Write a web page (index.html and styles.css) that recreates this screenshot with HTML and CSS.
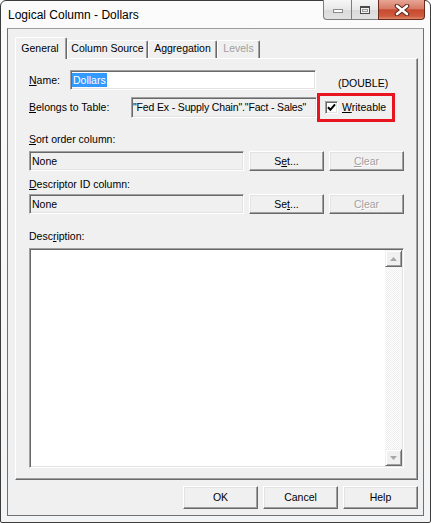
FILE: index.html
```html
<!DOCTYPE html>
<html>
<head>
<meta charset="utf-8">
<title>Logical Column - Dollars</title>
<link rel="stylesheet" href="styles.css">
</head>
<body>
<div class="window">
  <div class="titlebar">
    <span class="title">Logical Column - Dollars</span>
    <div class="caption">
      <div class="cap cap-min"><svg width="12" height="6" viewBox="0 0 12 6"><rect x="1.5" y="1.5" width="9" height="3" fill="#fdfdfd" stroke="#8a8a8a"/></svg></div>
      <div class="cap cap-max"><svg width="12" height="10" viewBox="0 0 12 10"><rect x="1.5" y="1.5" width="9" height="7" fill="#f4f4f4" stroke="#4a4a4a"/><rect x="1" y="1" width="10" height="2" fill="#4a4a4a"/><rect x="3.5" y="4.5" width="5" height="2" fill="none" stroke="#9a9a9a"/></svg></div>
      <div class="cap cap-close"><svg width="16" height="12" viewBox="0 0 16 12"><path d="M3 2 L13 10 M13 2 L3 10" stroke="#5d2418" stroke-width="4.6" stroke-linecap="round"/><path d="M3 2 L13 10 M13 2 L3 10" stroke="#ffffff" stroke-width="2.6" stroke-linecap="round"/></svg></div>
    </div>
  </div>
  <div class="client">
    <div class="tabs">
      <div class="tab active tab-general">General</div>
      <div class="tab tab-source">Column Source</div>
      <div class="tab tab-agg">Aggregation</div>
      <div class="tab disabled tab-levels">Levels</div>
    </div>
    <div class="panel">
      <div class="row row-name">
        <span class="lbl lbl-name"><u>N</u>ame:</span>
        <div class="field field-name"><span class="sel">Dollars</span></div>
        <span class="type">(DOUBLE)</span>
      </div>
      <div class="row row-table">
        <span class="lbl lbl-table"><u>B</u>elongs to Table:</span>
        <div class="field readonly field-table">"Fed Ex - Supply Chain"."Fact - Sales"</div>
        <div class="highlight">
          <span class="check"><svg width="9" height="9" viewBox="0 0 9 9"><path d="M1 4.2 L3.4 6.8 L8 1.4" fill="none" stroke="#000" stroke-width="2"/></svg></span>
          <span class="check-text"><u>W</u>riteable</span>
        </div>
      </div>
      <div class="block-lbl sort-lbl"><u>S</u>ort order column:</div>
      <div class="row row-pick">
        <div class="field readonly field-pick">None</div>
        <div class="btn btn-set">S<u>e</u>t...</div>
        <div class="btn btn-clear disabled"><u>C</u>lear</div>
      </div>
      <div class="block-lbl desc-id-lbl"><u>D</u>escriptor ID column:</div>
      <div class="row row-pick">
        <div class="field readonly field-pick">None</div>
        <div class="btn btn-set">Se<u>t</u>...</div>
        <div class="btn btn-clear disabled">C<u>l</u>ear</div>
      </div>
      <div class="block-lbl desc-lbl">Desc<u>r</u>iption:</div>
      <div class="memo">
        <div class="memo-text"></div>
        <div class="scrollbar">
          <div class="sb-btn"><svg width="7" height="4" viewBox="0 0 7 4"><path d="M0 4 L3.5 0 L7 4 Z" fill="#a8a8a8"/></svg></div>
          <div class="sb-track"></div>
          <div class="sb-btn"><svg width="7" height="4" viewBox="0 0 7 4"><path d="M0 0 L3.5 4 L7 0 Z" fill="#a8a8a8"/></svg></div>
        </div>
      </div>
    </div>
    <div class="footer">
      <div class="btn btn-dlg">OK</div>
      <div class="btn btn-dlg">Cancel</div>
      <div class="btn btn-dlg">Help</div>
    </div>
  </div>
</div>
</body>
</html>
```

FILE: styles.css
```css
* { box-sizing: border-box; margin: 0; padding: 0; }
html, body { width: 431px; height: 523px; overflow: hidden; background: #ffffff; }
body { font-family: "Liberation Sans", Arial, sans-serif; font-size: 10.5px; color: #000; }
u { text-decoration: underline; text-underline-offset: 1px; }

.window {
  width: 431px; height: 523px;
  border: 1px solid #3c3c3c;
  border-radius: 6px 6px 2px 2px;
  background: linear-gradient(#fbfbfc, #f3f4f5);
  padding: 0 6px 6px 6px;
  display: flex; flex-direction: column;
}
.titlebar { height: 27px; display: flex; justify-content: space-between; align-items: flex-start; }
.title { font-size: 12px; line-height: 14px; margin-top: 7px; margin-left: 1px; text-shadow: 0 0 6px #fff; }
.caption { display: flex; margin-top: -1px; margin-right: -1px; }
.cap { height: 20px; display: flex; align-items: center; justify-content: center; border: 1px solid #7e7e7e; border-top: none; }
.cap-min { width: 28px; border-radius: 0 0 0 4px; border-right: none; background: linear-gradient(#f6f6f6, #e8e8e8 50%, #dadada 51%, #e2e2e2); padding-top: 3px; }
.cap-max { width: 27px; background: linear-gradient(#f6f6f6, #e8e8e8 50%, #dadada 51%, #e2e2e2); border-right: none; }
.cap-close { width: 47px; border-radius: 0 0 4px 0; border-color: #6a2a1e; background: linear-gradient(#e6a595, #d77b66 45%, #c74a30 52%, #cf5a3e 85%, #e08a6a); }

.client {
  flex: 1;
  border: 1px solid #707070;
  border-top-color: #9c9c9c;
  background: #f0f0f0;
  padding: 8px 5px 0 7px;
  display: flex; flex-direction: column;
}

.tabs { display: flex; align-items: flex-end; height: 22px; margin-bottom: -1px; position: relative; z-index: 1; }
.tab {
  height: 18px; display: flex; align-items: center; justify-content: center;
  padding-bottom: 4px;
  background: #f0f0f0;
  border-top: 1px solid #ffffff; border-left: 1px solid #ffffff; border-right: 1px solid #696969;
  box-shadow: inset -1px 0 #a0a0a0;
  border-radius: 2px 2px 0 0;
  margin-bottom: 1px;
  white-space: nowrap;
}
.tab.active { height: 22px; margin-bottom: 0; padding-bottom: 1px; padding-top: 0; }
.tab-general { width: 52px; padding-right: 2px; }
.tab-source { width: 81px; }
.tab-agg { width: 69px; }
.tab-levels { width: 43px; }
.tab.disabled { color: #a0a0a0; }

.panel {
  width: 403px;
  border: 1px solid; border-color: #ffffff #696969 #696969 #ffffff;
  box-shadow: inset -1px -1px #a0a0a0;
  padding: 11px 13px 11px 13px;
  display: flex; flex-direction: column;
}

.row { display: flex; align-items: center; }
.lbl { line-height: 13px; white-space: nowrap; }
.field {
  border: 1px solid; border-color: #a0a0a0 #ffffff #ffffff #a0a0a0;
  box-shadow: inset 1px 1px #696969, inset -1px -1px #e3e3e3;
  white-space: nowrap; overflow: hidden;
  display: flex; align-items: center;
  line-height: 13px;
}
.readonly { background: #f0f0f0; padding-left: 2px; }

.row-name { height: 20px; }
.lbl-name { width: 41px; }
.field-name { width: 246px; height: 20px; background: #ffffff; padding-left: 1px; }
.sel { background: #3399ff; color: #fff; padding: 0 1px; line-height: 14px; }
.type { margin-left: 22px; align-self: flex-end; line-height: 13px; }

.row-table { height: 29px; margin-top: 3px; }
.lbl-table { width: 102px; }
.field-table { width: 186px; height: 21px; letter-spacing: -0.15px; padding-left: 1px; }
.highlight {
  width: 78px; height: 29px;
  border: 3px solid #e8141f;
  display: flex; align-items: center;
  padding-left: 5px;
}
.check {
  width: 13px; height: 13px; background: #fff;
  border: 1px solid; border-color: #a0a0a0 #ffffff #ffffff #a0a0a0;
  box-shadow: inset 1px 1px #696969, inset -1px -1px #e3e3e3;
  display: flex; align-items: center; justify-content: center;
}
.check-text { margin-left: 4px; line-height: 13px; }

.block-lbl { line-height: 13px; }
.sort-lbl { margin-top: 11px; }
.desc-id-lbl { margin-top: 7px; }
.desc-lbl { margin-top: 16px; }
.row-pick { height: 20px; margin-top: 4px; }
.sort-lbl + .row-pick { margin-top: 5px; }
.desc-id-lbl + .row-pick { margin-top: 3px; }
.field-pick { width: 215px; height: 20px; }

.btn {
  background: #f0f0f0;
  border: 1px solid; border-color: #ffffff #696969 #696969 #ffffff;
  box-shadow: inset -1px -1px #a0a0a0, inset 1px 1px #e3e3e3;
  display: flex; align-items: center; justify-content: center;
  line-height: 13px; white-space: nowrap;
}
.btn-set, .btn-clear { width: 75px; height: 20px; margin-left: 5px; }
.btn.disabled { color: #a0a0a0; text-shadow: 1px 1px #ffffff; }

.memo {
  margin-top: 5px;
  width: 375px; height: 220px;
  background: #ffffff;
  border: 1px solid; border-color: #a0a0a0 #ffffff #ffffff #a0a0a0;
  box-shadow: inset 1px 1px #696969, inset -1px -1px #e3e3e3;
  display: flex;
}
.memo-text { flex: 1; }
.scrollbar { width: 17px; margin: 1px 1px 1px 0; display: flex; flex-direction: column; }
.sb-btn {
  height: 17px; background: #f0f0f0;
  border: 1px solid; border-color: #f0f0f0 #696969 #696969 #f0f0f0;
  box-shadow: inset 1px 1px #ffffff, inset -1px -1px #a0a0a0;
  display: flex; align-items: center; justify-content: center;
}
.sb-track { flex: 1; background: repeating-conic-gradient(#ffffff 0 25%, #eeeeee 0 50%) 0 0 / 2px 2px; }

.footer { display: flex; justify-content: flex-end; gap: 5px; margin-top: 6px; }
.btn-dlg { width: 75px; height: 23px; }
```
